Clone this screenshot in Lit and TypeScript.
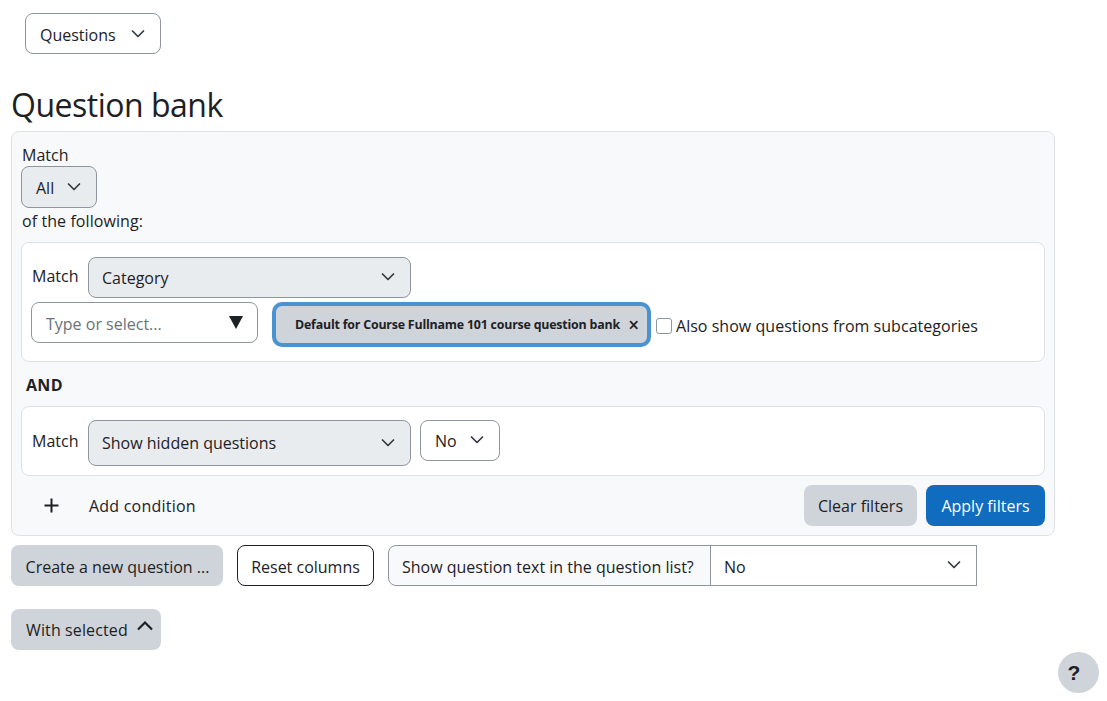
import { LitElement, html, css } from "lit";
import { customElement } from "lit/decorators.js";

const chev = html`<svg class="chev" viewBox="0 0 16 12" width="16" height="12"><path d="M2.500 3L8 8.500 13.500 3" fill="none" stroke="#343a40" stroke-width="1.700" stroke-linecap="round" stroke-linejoin="round"/></svg>`;

@customElement("app-root")
export class AppRoot extends LitElement {
  static styles = css`
    :host { display: block; width: 1107px; height: 701px; overflow: hidden; position: relative; background: #fff; color: #1d2125; font-family: "Open Sans", "Noto Sans", sans-serif; font-size: 16px; line-height: 22px; box-sizing: border-box; }
    * { box-sizing: border-box; }
    .page { padding: 13px 52px 0 11px; display: flex; flex-direction: column; }
    .sel { display: flex; align-items: center; justify-content: space-between; border: 1px solid #8f959e; border-radius: 8px; padding: 0 14px 0 13px; height: 41px; flex: none; }
    .sel > span { padding-top: 2px; }
    .gray { background: #e9ecef; }
    .white { background: #fff; }
    .qs { width: 136px; margin-left: 14px; }
    .qs span { padding-left: 1px; }
    h2 { margin: 29px 0 0 0; font-size: 32px; font-weight: 400; line-height: 44px; letter-spacing: -0.5px; height: 48px; }
    .panel { background: #f8f9fa; border: 1px solid #dee2e6; border-radius: 8px; padding: 12px 9px 9px 9px; height: 405px; margin-top: -0.5px; display: flex; flex-direction: column; }
    .l { padding-left: 1px; line-height: 22px; }
    .all { width: 76px; height: 42px; padding-left: 14px; }
    .of { margin-top: 2px; padding-left: 1px; letter-spacing: 0.08px; }
    .card { background: #fff; border: 1px solid #dee2e6; border-radius: 8px; padding: 14px 9px 0; }
    .c1 { height: 120px; margin-top: 10px; }
    .c2 { height: 70px; margin-top: 10px; padding-top: 13px; }
    .c2 .m { line-height: 43px; }
    .row { display: flex; align-items: flex-start; }
    .m { width: 57px; padding-left: 1px; line-height: 38px; flex: none; }
    .wide { width: 323px; }
    .tall { height: 46px; }
    .tall > span { padding-top: 1px; }
    .second { margin-top: 4px; }
    .type { width: 227px; color: #6a737b; height: 41px; padding-left: 14px; }
    .type > span { padding-top: 3px; }
    .tri { width: 0; height: 0; border-left: 7.500px solid transparent; border-right: 7.500px solid transparent; border-top: 13px solid #1d2125; }
    .type > .tri { padding: 0; }
    .chip { width: 379px; height: 45px; margin-left: 14px; border: 4px solid #4b92d1; border-radius: 10px; background: #ced4da; display: flex; align-items: center; justify-content: space-between; padding: 1px 8px 0 19px; font-size: 12.400px; font-weight: 700; letter-spacing: -0.2px; flex: none; }
    .x { font-size: 19px; font-weight: 600; letter-spacing: 0; }
    .chk { width: 16px; height: 16px; margin: 16px 4px 0 5px; background: #fff; border: 1px solid #8f959e; border-radius: 3px; flex: none; }
    .cl { line-height: 22px; margin-top: 13px; letter-spacing: 0.03px; }
    .and { font-weight: 700; margin: 12px 0 0 5px; height: 22px; letter-spacing: 0.3px; }
    .no { width: 80px; margin-left: 9px; padding-left: 14px; }
    .acts { display: flex; align-items: center; margin-top: 9px; height: 41px; }
    .plus { width: 68px; padding-left: 23px; display: flex; flex: none; }
    .add { letter-spacing: 0.22px; padding-top: 2px; }
    .grow { flex: 1; }
    .btn { height: 41px; border-radius: 8px; display: flex; align-items: center; justify-content: center; flex: none; padding-top: 2px; }
    .sec { background: #ced4da; }
    .clear { width: 113px; margin-right: 9px; }
    .apply { width: 119px; background: #0f6cbf; color: #fff; }
    .bar { display: flex; margin-top: 9px; }
    .bar .btn, .bar .pre, .bar .post > span { padding-top: 3px; }
    .bar .post > .chev { margin-top: -1px; }
    .create { width: 212px; padding-left: 1px; }
    .reset { width: 137px; margin-left: 14px; border: 1px solid #1d2125; background: #fff; }
    .group { display: flex; margin-left: 14px; height: 41px; }
    .pre { width: 323px; background: #f8f9fa; border: 1px solid #8f959e; border-radius: 8px 0 0 8px; padding-left: 13px; display: flex; align-items: center; }
    .post { width: 267px; margin-left: -1px; border: 1px solid #8f959e; display: flex; align-items: center; justify-content: space-between; padding: 0 14px 0 13px; background: #fff; }
    .with { width: 150px; margin-top: 23px; justify-content: flex-start; padding-left: 15px; letter-spacing: 0.12px; }
    .up { margin: -8px 0 0 9px; }
    .help { position: absolute; left: 1058px; top: 652px; width: 41px; height: 41px; border-radius: 50%; background: #ced4da; display: flex; align-items: center; justify-content: center; padding-right: 9px; font-family: "Liberation Sans", sans-serif; font-weight: 700; font-size: 21px; }
  `;

  render() {
    return html`
      <div class="page">
        <div class="sel white qs"><span>Questions</span>${chev}</div>
        <h2>Question bank</h2>
        <div class="panel">
          <div class="l">Match</div>
          <div class="sel gray all"><span>All</span>${chev}</div>
          <div class="of">of the following:</div>
          <div class="card c1">
            <div class="row">
              <div class="m">Match</div>
              <div class="sel gray wide"><span>Category</span>${chev}</div>
            </div>
            <div class="row second">
              <div class="sel white type"><span>Type or select...</span><span class="tri"></span></div>
              <div class="chip"><span>Default for Course Fullname 101 course question bank</span><span class="x">×</span></div>
              <span class="chk"></span>
              <span class="cl">Also show questions from subcategories</span>
            </div>
          </div>
          <div class="and">AND</div>
          <div class="card c2">
            <div class="row">
              <div class="m">Match</div>
              <div class="sel gray wide tall"><span>Show hidden questions</span>${chev}</div>
              <div class="sel white no"><span>No</span>${chev}</div>
            </div>
          </div>
          <div class="acts">
            <span class="plus"><svg width="15" height="15" viewBox="0 0 15 15"><path d="M7.500 .5v14M.5 7.500h14" stroke="#1d2125" stroke-width="2"/></svg></span>
            <span class="add">Add condition</span>
            <span class="grow"></span>
            <div class="btn sec clear">Clear filters</div>
            <div class="btn apply">Apply filters</div>
          </div>
        </div>
        <div class="bar">
          <div class="btn sec create">Create a new question ...</div>
          <div class="btn reset">Reset columns</div>
          <div class="group">
            <div class="pre">Show question text in the question list?</div>
            <div class="post"><span>No</span>${chev}</div>
          </div>
        </div>
        <div class="btn sec with"><span>With selected</span><svg class="up" width="16" height="12" viewBox="0 0 16 12"><path d="M1 9.500l7-7 7 7" fill="none" stroke="#1d2125" stroke-width="2.200"/></svg></div>
      </div>
      <div class="help">?</div>
    `;
  }
}
